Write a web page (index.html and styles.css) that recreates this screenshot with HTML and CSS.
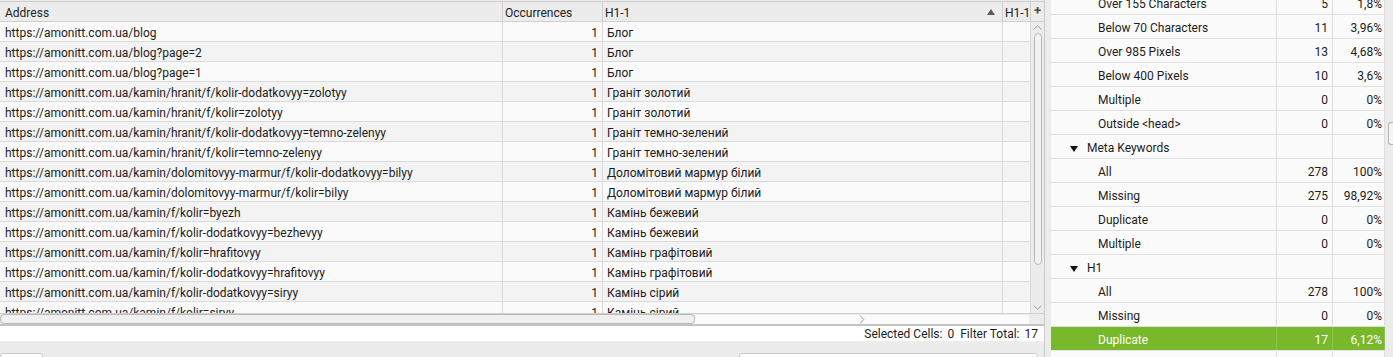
FILE: index.html
```html
<!DOCTYPE html>
<html lang="en">
<head>
    <title>H1 Duplicate</title>
    <meta charset="UTF-8">
    <link rel="stylesheet" href="styles.css">
</head>

<body>
    <div class="app">
        <div class="left">
            <div class="grid">
                <div class="table">
                    <div class="row head">
                        <div class="cell addr">Address</div>
                        <div class="cell">Occurrences</div>
                        <div class="cell sorted">H1-1 <span class="sort"></span></div>
                        <div class="cell">H1-1</div>
                    </div>
                    <div class="body">
                        <div class="row"><div class="cell addr">https://amonitt.com.ua/blog</div><div class="cell num">1</div><div class="cell txt">Блог</div><div class="cell"></div></div>
                        <div class="row"><div class="cell addr">https://amonitt.com.ua/blog?page=2</div><div class="cell num">1</div><div class="cell txt">Блог</div><div class="cell"></div></div>
                        <div class="row"><div class="cell addr">https://amonitt.com.ua/blog?page=1</div><div class="cell num">1</div><div class="cell txt">Блог</div><div class="cell"></div></div>
                        <div class="row"><div class="cell addr">https://amonitt.com.ua/kamin/hranit/f/kolir-dodatkovyy=zolotyy</div><div class="cell num">1</div><div class="cell txt">Граніт золотий</div><div class="cell"></div></div>
                        <div class="row"><div class="cell addr">https://amonitt.com.ua/kamin/hranit/f/kolir=zolotyy</div><div class="cell num">1</div><div class="cell txt">Граніт золотий</div><div class="cell"></div></div>
                        <div class="row"><div class="cell addr">https://amonitt.com.ua/kamin/hranit/f/kolir-dodatkovyy=temno-zelenyy</div><div class="cell num">1</div><div class="cell txt">Граніт темно-зелений</div><div class="cell"></div></div>
                        <div class="row"><div class="cell addr">https://amonitt.com.ua/kamin/hranit/f/kolir=temno-zelenyy</div><div class="cell num">1</div><div class="cell txt">Граніт темно-зелений</div><div class="cell"></div></div>
                        <div class="row"><div class="cell addr">https://amonitt.com.ua/kamin/dolomitovyy-marmur/f/kolir-dodatkovyy=bilyy</div><div class="cell num">1</div><div class="cell txt">Доломітовий мармур білий</div><div class="cell"></div></div>
                        <div class="row"><div class="cell addr">https://amonitt.com.ua/kamin/dolomitovyy-marmur/f/kolir=bilyy</div><div class="cell num">1</div><div class="cell txt">Доломітовий мармур білий</div><div class="cell"></div></div>
                        <div class="row"><div class="cell addr">https://amonitt.com.ua/kamin/f/kolir=byezh</div><div class="cell num">1</div><div class="cell txt">Камінь бежевий</div><div class="cell"></div></div>
                        <div class="row"><div class="cell addr">https://amonitt.com.ua/kamin/f/kolir-dodatkovyy=bezhevyy</div><div class="cell num">1</div><div class="cell txt">Камінь бежевий</div><div class="cell"></div></div>
                        <div class="row"><div class="cell addr">https://amonitt.com.ua/kamin/f/kolir=hrafitovyy</div><div class="cell num">1</div><div class="cell txt">Камінь графітовий</div><div class="cell"></div></div>
                        <div class="row"><div class="cell addr">https://amonitt.com.ua/kamin/f/kolir-dodatkovyy=hrafitovyy</div><div class="cell num">1</div><div class="cell txt">Камінь графітовий</div><div class="cell"></div></div>
                        <div class="row"><div class="cell addr">https://amonitt.com.ua/kamin/f/kolir-dodatkovyy=siryy</div><div class="cell num">1</div><div class="cell txt">Камінь сірий</div><div class="cell"></div></div>
                        <div class="row"><div class="cell addr">https://amonitt.com.ua/kamin/f/kolir=siryy</div><div class="cell num">1</div><div class="cell txt">Камінь сірий</div><div class="cell"></div></div>
                    </div>
                </div>
                <div class="vbar">
                    <div class="plus">+</div>
                    <div class="track">
                        <svg class="arrow" width="9" height="5" viewBox="0 0 9 5"><path d="M0.5 4.5 L4.5 0.8 L8.5 4.5" fill="none" stroke="#9a9a9a" stroke-width="1"/></svg>
                        <div class="vthumb"></div>
                        <svg class="arrow down" width="9" height="5" viewBox="0 0 9 5"><path d="M0.5 0.5 L4.5 4.2 L8.5 0.5" fill="none" stroke="#9a9a9a" stroke-width="1"/></svg>
                    </div>
                </div>
            </div>
            <div class="hbar">
                <div class="hthumb"></div>
                <svg class="arrow right" width="5" height="9" viewBox="0 0 5 9"><path d="M0.5 0.5 L4.2 4.5 L0.5 8.5" fill="none" stroke="#9a9a9a" stroke-width="1"/></svg>
            </div>
            <div class="status">
                <span>Selected Cells:</span><span class="val">0</span><span>Filter Total:</span><span class="val">17</span>
            </div>
            <div class="footer">
                <div class="box small"></div>
                <div class="box wide"></div>
            </div>
        </div>

        <div class="right">
            <div class="list">
                <div class="item"><div class="label">Over 155 Characters</div><div class="count">5</div><div class="pct">1,8%</div></div>
                <div class="item"><div class="label">Below 70 Characters</div><div class="count">11</div><div class="pct">3,96%</div></div>
                <div class="item"><div class="label">Over 985 Pixels</div><div class="count">13</div><div class="pct">4,68%</div></div>
                <div class="item"><div class="label">Below 400 Pixels</div><div class="count">10</div><div class="pct">3,6%</div></div>
                <div class="item"><div class="label">Multiple</div><div class="count">0</div><div class="pct">0%</div></div>
                <div class="item"><div class="label">Outside &lt;head&gt;</div><div class="count">0</div><div class="pct">0%</div></div>
                <div class="item group"><div class="label"><span class="tri"></span>Meta Keywords</div><div class="count"></div><div class="pct"></div></div>
                <div class="item"><div class="label">All</div><div class="count">278</div><div class="pct">100%</div></div>
                <div class="item"><div class="label">Missing</div><div class="count">275</div><div class="pct">98,92%</div></div>
                <div class="item"><div class="label">Duplicate</div><div class="count">0</div><div class="pct">0%</div></div>
                <div class="item"><div class="label">Multiple</div><div class="count">0</div><div class="pct">0%</div></div>
                <div class="item group"><div class="label"><span class="tri"></span>H1</div><div class="count"></div><div class="pct"></div></div>
                <div class="item"><div class="label">All</div><div class="count">278</div><div class="pct">100%</div></div>
                <div class="item"><div class="label">Missing</div><div class="count">0</div><div class="pct">0%</div></div>
                <div class="item selected"><div class="label">Duplicate</div><div class="count">17</div><div class="pct">6,12%</div></div>
                <div class="item"><div class="label"></div><div class="count"></div><div class="pct"></div></div>
            </div>
        </div>

        <div class="edge">
            <div class="handle"></div>
        </div>
    </div>
</body>
</html>
```

FILE: styles.css
```css
body {
    margin: 0;
    background: #ececec;
    font-family: Roboto, "Noto Sans", Arial, sans-serif;
    font-size: 12px;
    color: #1c1c1c;
}

.app {
    display: flex;
    height: 357px;
    overflow: hidden;
}

/* left pane */

.left {
    width: 1044px;
    border-right: 1px solid #c9c9c9;
    display: flex;
    flex-direction: column;
    flex: none;
}

.grid {
    display: flex;
    margin-top: 1px;
    border-top: 1px solid #cdcdcd;
}

.table {
    width: 1031px;
}

.row {
    display: grid;
    grid-template-columns: 503px 100px 400px 28px;
    height: 20px;
    box-sizing: border-box;
    border-bottom: 1px solid #dadada;
}

.row .cell {
    border-right: 1px solid #dadada;
    padding-top: 3px;
    line-height: 16px;
    white-space: nowrap;
    overflow: hidden;
    padding-left: 3px;
}

.head {
    background: #ececec;
    border-bottom-color: #d0d0d0;
}

.head .cell {
    border-right-color: #d0d0d0;
    padding-left: 2px;
    color: #222;
}

.head .addr {
    padding-left: 5px;
}

.sorted {
    display: flex;
    justify-content: space-between;
    align-items: center;
    padding-right: 7px;
}

.sort {
    width: 0;
    height: 0;
    border-left: 4px solid transparent;
    border-right: 4px solid transparent;
    border-bottom: 6px solid #5a5a5a;
    margin-top: -3px;
}

.body {
    height: 291px;
    overflow: hidden;
}

.body .row:nth-child(odd) {
    background: #fafafa;
}

.body .row:nth-child(even) {
    background: #f3f3f3;
}

.body .addr {
    padding-left: 5px;
}

.body .num {
    text-align: right;
    padding-right: 4px;
}

.body .txt {
    padding-left: 4px;
}

.vbar {
    width: 13px;
    display: flex;
    flex-direction: column;
}

.plus {
    height: 19px;
    border-bottom: 1px solid #d0d0d0;
    text-align: center;
    font-weight: bold;
    font-size: 13px;
    line-height: 18px;
    color: #4a4a4a;
}

.track {
    height: 291px;
    background: #ececec;
    display: flex;
    flex-direction: column;
    align-items: center;
    padding-top: 3px;
    box-sizing: border-box;
}

.arrow {
    display: block;
}

.vthumb {
    width: 8px;
    height: 232px;
    margin-top: 3px;
    border: 1px solid #b9b9b9;
    border-radius: 4px;
    background: #f2f2f2;
    box-sizing: border-box;
}

.arrow.down {
    margin-top: auto;
    margin-bottom: 3px;
}

.hbar {
    height: 14px;
    box-sizing: border-box;
    border-top: 1px solid #cfcfcf;
    border-bottom: 2px solid #c4c4c4;
    display: flex;
    align-items: center;
    padding-right: 15px;
}

.hthumb {
    width: 732px;
    height: 10px;
    border: 1px solid #b9b9b9;
    border-radius: 4px;
    background: #f0f0f0;
    box-sizing: border-box;
}

.arrow.right {
    margin-left: auto;
}

.status {
    height: 15px;
    background: #fff;
    display: flex;
    justify-content: flex-end;
    padding-top: 1px;
    line-height: 14px;
    box-sizing: border-box;
    padding-right: 6px;
}

.status .val {
    margin: 0 6px 0 5px;
}

.status .val:last-child {
    margin-right: 0;
}

.footer {
    flex: 1;
    display: flex;
    justify-content: space-between;
    padding: 12px 6px 0 0;
}

.box {
    height: 20px;
    background: #fff;
    border: 1px solid #c9c9c9;
    border-radius: 3px;
    box-sizing: border-box;
}

.box.small {
    width: 43px;
}

.box.wide {
    width: 299px;
}

/* right pane */

.right {
    margin-left: 6px;
    width: 334px;
    flex: none;
    background: #fbfbfb;
    overflow: hidden;
}

.list {
    margin-top: -9px;
}

.item {
    display: grid;
    grid-template-columns: 226px 56px 52px;
    height: 24px;
    box-sizing: border-box;
    border-bottom: 1px solid #dedede;
}

.item > div {
    border-right: 1px solid #dedede;
    padding-top: 4px;
    line-height: 19px;
    white-space: nowrap;
}

.label {
    padding-left: 47px;
}

.count {
    text-align: right;
    padding-right: 4px;
}

.pct {
    text-align: right;
    padding-right: 2px;
}

.group .label {
    padding-left: 19px;
    display: flex;
    align-items: center;
}

.tri {
    width: 0;
    height: 0;
    border-left: 4px solid transparent;
    border-right: 4px solid transparent;
    border-top: 6px solid #111;
    margin-right: 9px;
}

.selected {
    background: #78b82a;
    color: #fff;
    border-bottom-color: #e6e6e6;
}

.selected > div {
    border-right-color: #8ec24d;
}

.edge {
    flex: 1;
    padding-top: 122px;
}

.handle {
    margin-left: 3px;
    height: 21px;
    border: 1px solid #b5b5b5;
    border-right: none;
    border-radius: 3px 0 0 3px;
    background: #f4f4f4;
}
```
